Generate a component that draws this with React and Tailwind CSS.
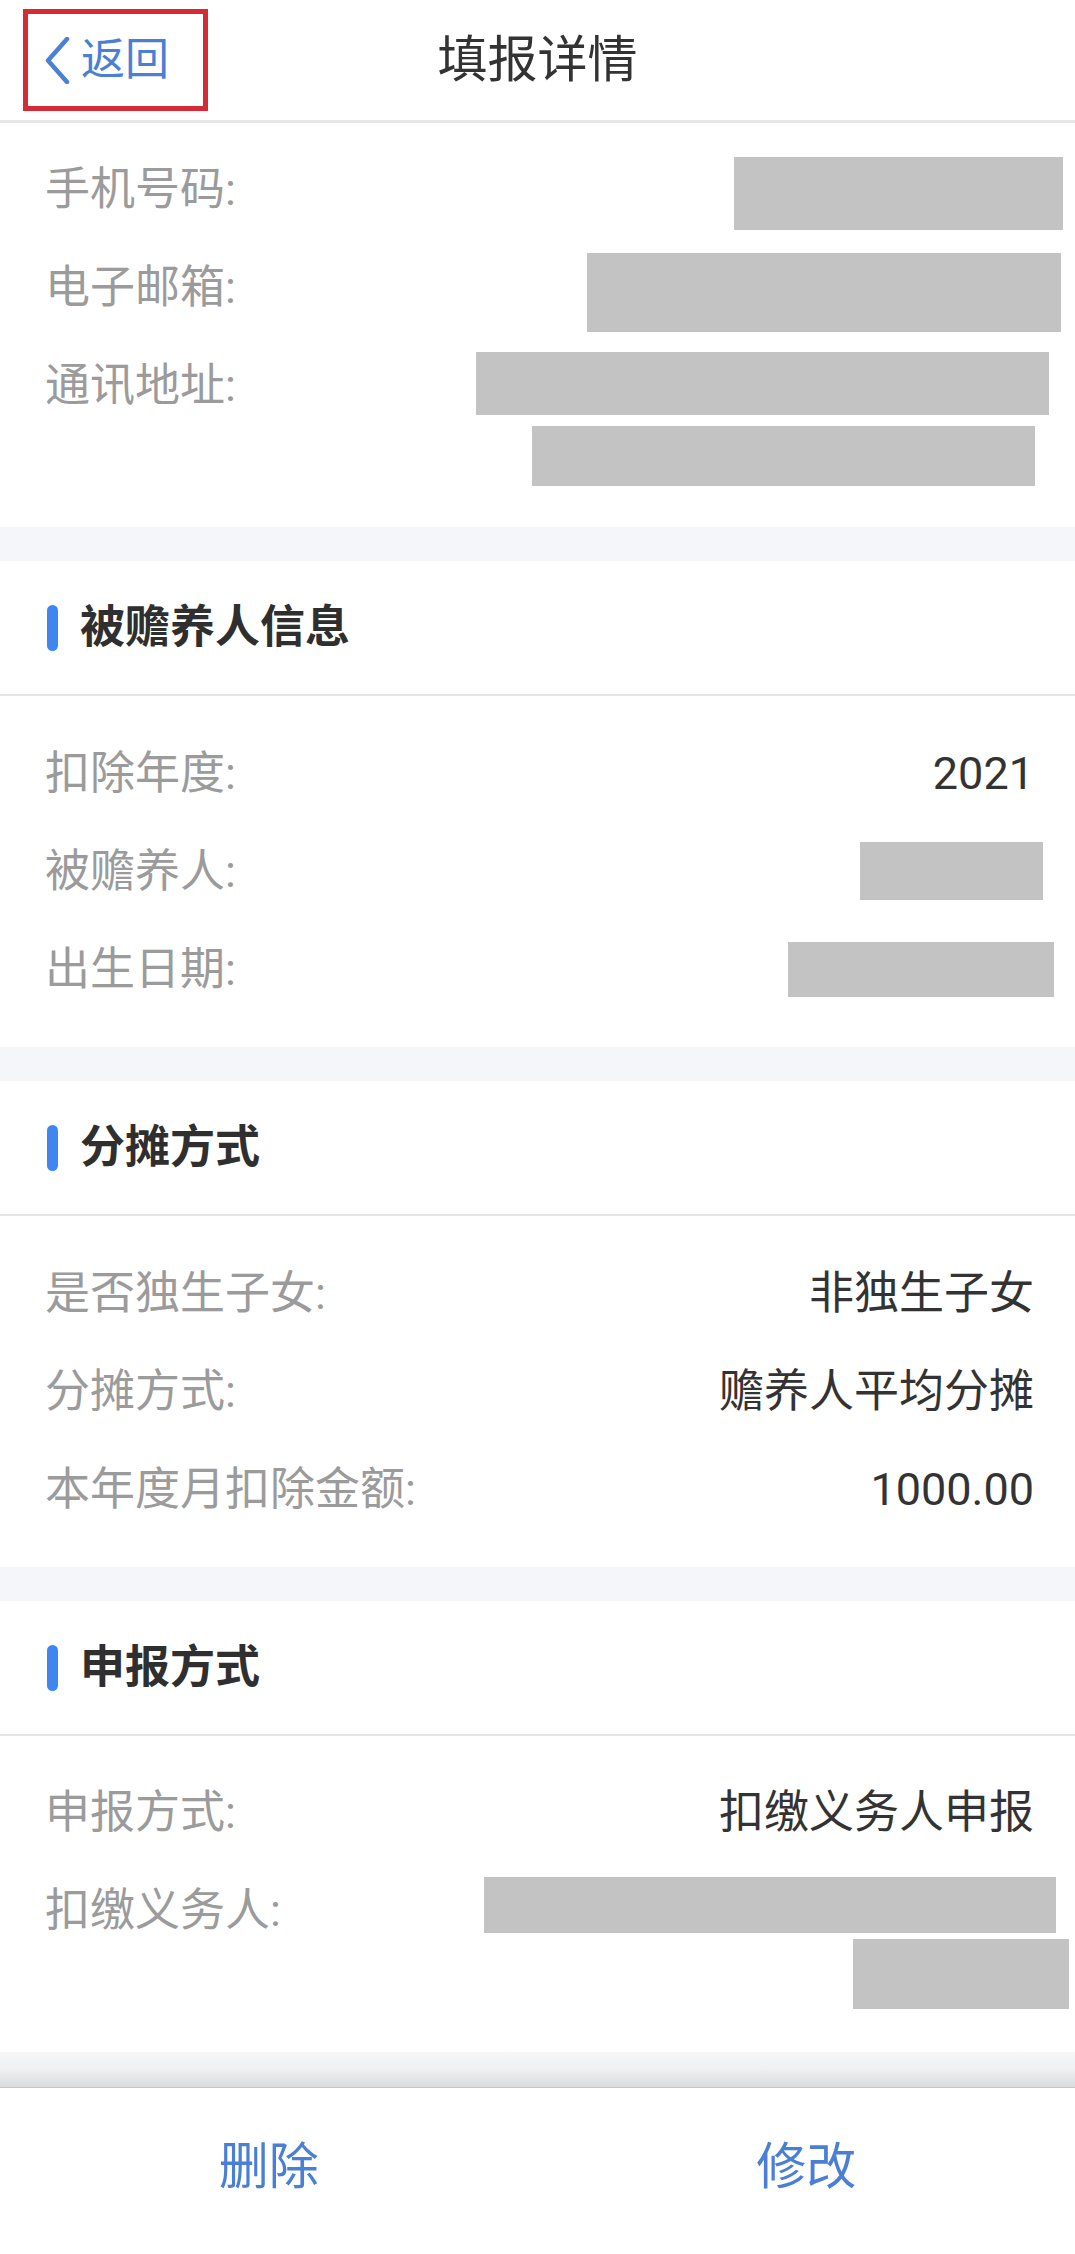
import React from "react";

const Band = () => <div className="h-[34px] bg-[#f4f6f9]" />;

const SectionHeader = ({ title }) => (
  <div className="flex h-[135px] items-center gap-[22px] border-b-2 border-[#e6e6e6] pl-[47px]">
    <div className="h-[46px] w-[11px] rounded-full bg-[#3f86f0]" />
    <span className="text-[45px] font-bold leading-none text-[#2f2f2f]">{title}</span>
  </div>
);

const Label = ({ children }) => (
  <span className="text-[45px] leading-none text-[#9b9b9b]">{children}</span>
);

const TextRow = ({ label, value }) => (
  <div className="flex h-[98px] items-center justify-between pl-[45px]">
    <Label>{label}</Label>
    <span className="mr-[41px] text-[45px] leading-none text-[#333333]">{value}</span>
  </div>
);

const BoxRow = ({ label, boxClass }) => (
  <div className="flex h-[98px] items-center justify-between pl-[45px]">
    <Label>{label}</Label>
    <div className={boxClass} />
  </div>
);

export default function App() {
  return (
    <div className="w-full bg-white font-['Roboto','Noto_Sans_CJK_SC',sans-serif]">
      {/* Top nav */}
      <div className="grid h-[123px] grid-cols-[1fr_auto_1fr] items-center border-b-[3px] border-[#e6e6e6]">
        <div className="flex">
          <div className="ml-[23px] flex h-[102px] w-[185px] items-center border-[5px] border-[#d52b35] pl-[17px]">
            <svg width="25" height="47" viewBox="0 0 25 47" fill="none">
              <polyline
                points="22,2 3,23.5 22,45"
                stroke="#4a80d8"
                strokeWidth="4.5"
                strokeLinecap="round"
                strokeLinejoin="round"
              />
            </svg>
            <span className="ml-[11px] text-[44px] leading-none text-[#4a7fd4]">返回</span>
          </div>
        </div>
        <span className="text-[50px] leading-none text-[#333333]">填报详情</span>
        <div />
      </div>

      {/* Contact section */}
      <div className="pt-[17px] pb-[41px]">
        <div className="flex h-[98px] items-center justify-between pl-[45px]">
          <Label>手机号码:</Label>
          <div className="mt-[9px] mr-[12px] h-[73px] w-[329px] bg-[#c3c3c3]" />
        </div>
        <div className="flex h-[98px] items-center justify-between pl-[45px]">
          <Label>电子邮箱:</Label>
          <div className="mt-[11px] mr-[14px] h-[79px] w-[474px] bg-[#c3c3c3]" />
        </div>
        <div className="flex items-start justify-between pl-[45px]">
          <div className="flex h-[98px] items-center">
            <Label>通讯地址:</Label>
          </div>
          <div className="flex flex-col items-end gap-[11px] pt-[16px]">
            <div className="mr-[26px] h-[63px] w-[573px] bg-[#c3c3c3]" />
            <div className="mr-[40px] h-[60px] w-[503px] bg-[#c3c3c3]" />
          </div>
        </div>
      </div>

      <Band />

      {/* Dependent info */}
      <SectionHeader title="被赡养人信息" />
      <div className="pt-[28px] pb-[29px]">
        <TextRow label="扣除年度:" value="2021" />
        <BoxRow label="被赡养人:" boxClass="mr-[32px] h-[58px] w-[183px] bg-[#c3c3c3]" />
        <BoxRow label="出生日期:" boxClass="mr-[21px] h-[55px] w-[266px] bg-[#c3c3c3]" />
      </div>

      <Band />

      {/* Split method */}
      <SectionHeader title="分摊方式" />
      <div className="pt-[28px] pb-[29px]">
        <TextRow label="是否独生子女:" value="非独生子女" />
        <TextRow label="分摊方式:" value="赡养人平均分摊" />
        <TextRow label="本年度月扣除金额:" value="1000.00" />
      </div>

      <Band />

      {/* Declaration method */}
      <SectionHeader title="申报方式" />
      <div className="pt-[27px] pb-[43px]">
        <TextRow label="申报方式:" value="扣缴义务人申报" />
        <div className="flex items-start justify-between pl-[45px]">
          <div className="flex h-[98px] items-center">
            <Label>扣缴义务人:</Label>
          </div>
          <div className="flex flex-col items-end gap-[6px] pt-[16px]">
            <div className="mr-[19px] h-[56px] w-[572px] bg-[#c3c3c3]" />
            <div className="mr-[6px] h-[70px] w-[216px] bg-[#c3c3c3]" />
          </div>
        </div>
      </div>

      {/* Bottom bar with shadow */}
      <div className="h-[36px] border-b border-[#c6c6c6] bg-linear-to-b from-[#f6f7f9] via-[#eff0f2] to-[#dadbde]" />
      <div className="grid h-[166px] grid-cols-2 items-center pb-[8px]">
        <span className="text-center text-[50px] leading-none text-[#4a7fd5]">删除</span>
        <span className="text-center text-[50px] leading-none text-[#4a7fd5]">修改</span>
      </div>
    </div>
  );
}
